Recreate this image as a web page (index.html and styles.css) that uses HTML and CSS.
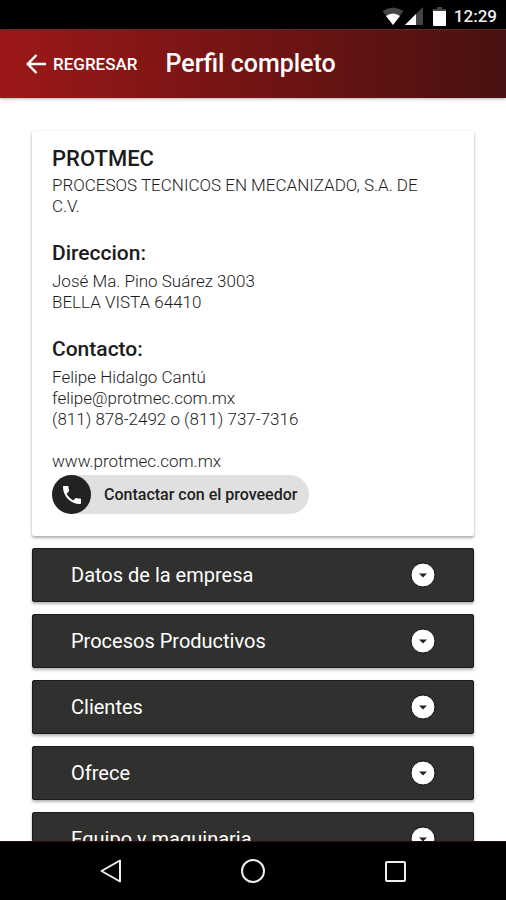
FILE: index.html
```html
<!DOCTYPE html>
<html lang="es">
<head>
<meta charset="utf-8">
<meta name="viewport" content="width=device-width, initial-scale=1">
<title>Perfil completo</title>
<link rel="stylesheet" href="styles.css">
</head>
<body>
<div class="status">
  <svg class="status-wifi" width="22" height="18" viewBox="0 0 22 18" aria-hidden="true"><path fill="#444" d="M11 18 .5 4Q11-3 21.500 4z"/><path fill="#fff" d="M11 18 4 9Q11 4 18 9z"/></svg>
  <svg class="status-signal" width="18" height="18" viewBox="0 0 18 18" aria-hidden="true"><path fill="#444" d="M0 18 18 0v18z"/><path fill="#fff" d="M0 18 11 7v11z"/></svg>
  <svg class="status-battery" width="13" height="19" viewBox="0 0 13 19" aria-hidden="true"><path fill="#444" d="M4 0h5v2h3q1 0 1 1v2H0V3q0-1 1-1h3z"/><path fill="#fff" d="M0 4h13v14q0 1-1 1H1q-1 0-1-1z"/></svg>
  <span class="status-time">12:29</span>
</div>
<header class="header">
  <a class="back" href="#">
    <svg width="20" height="20" viewBox="0 0 20 20" fill="none" stroke="currentColor" stroke-width="2.500" aria-hidden="true"><path d="M20 10H2M10.500 1 1.800 10l8.700 9"/></svg>
    <span>REGRESAR</span>
  </a>
  <h1 class="title">Perfil completo</h1>
</header>
<main class="content">
  <section class="card">
    <h2 class="company">PROTMEC</h2>
    <p class="text">PROCESOS TECNICOS EN MECANIZADO, S.A. DE C.V.</p>
    <h3 class="heading">Direccion:</h3>
    <p class="text">José Ma. Pino Suárez 3003<br>BELLA VISTA 64410</p>
    <h3 class="heading">Contacto:</h3>
    <p class="text">Felipe Hidalgo Cantú<br>felipe@protmec.com.mx<br>(811) 878-2492 o (811) 737-7316</p>
    <p class="text site">www.protmec.com.mx</p>
    <button class="contact" type="button">
      <span class="contact-icon"><svg width="24" height="24" viewBox="0 0 24 24" fill="#fff" aria-hidden="true"><path d="M6.620 10.790c1.440 2.830 3.760 5.140 6.590 6.590l2.200-2.200c.27-.27.67-.36 1.020-.24 1.120.37 2.330.57 3.570.57.55 0 1 .45 1 1V20c0 .55-.45 1-1 1-9.390 0-17-7.610-17-17 0-.55.45-1 1-1h3.500c.55 0 1 .45 1 1 0 1.250.2 2.450.57 3.570.11.350.03.740-.25 1.020z"/></svg></span>
      <span>Contactar con el proveedor</span>
    </button>
  </section>
  <button class="row" type="button"><span>Datos de la empresa</span><svg width="26" height="26" viewBox="0 0 26 26" aria-hidden="true"><circle class="disc" cx="13" cy="13" r="12"/><path class="caret" d="M9 11.500h8l-4 4z"/></svg></button>
  <button class="row" type="button"><span>Procesos Productivos</span><svg width="26" height="26" viewBox="0 0 26 26" aria-hidden="true"><circle class="disc" cx="13" cy="13" r="12"/><path class="caret" d="M9 11.500h8l-4 4z"/></svg></button>
  <button class="row" type="button"><span>Clientes</span><svg width="26" height="26" viewBox="0 0 26 26" aria-hidden="true"><circle class="disc" cx="13" cy="13" r="12"/><path class="caret" d="M9 11.500h8l-4 4z"/></svg></button>
  <button class="row" type="button"><span>Ofrece</span><svg width="26" height="26" viewBox="0 0 26 26" aria-hidden="true"><circle class="disc" cx="13" cy="13" r="12"/><path class="caret" d="M9 11.500h8l-4 4z"/></svg></button>
  <button class="row" type="button"><span>Equipo y maquinaria</span><svg width="26" height="26" viewBox="0 0 26 26" aria-hidden="true"><circle class="disc" cx="13" cy="13" r="12"/><path class="caret" d="M9 11.500h8l-4 4z"/></svg></button>
</main>
<nav class="navbar">
  <button class="nav-button" type="button" aria-label="Atrás"><svg width="26" height="26" viewBox="0 0 26 26"><path d="M22 2.500v21L3.500 13z"/></svg></button>
  <button class="nav-button" type="button" aria-label="Inicio"><svg width="26" height="26" viewBox="0 0 26 26"><circle cx="13" cy="13" r="11"/></svg></button>
  <button class="nav-button" type="button" aria-label="Recientes"><svg width="26" height="26" viewBox="0 0 26 26"><rect x="4" y="4" width="19" height="19" rx="1"/></svg></button>
</nav>
</body>
</html>
```

FILE: styles.css
```css
* {
  box-sizing: border-box;
}

body {
  display: flex;
  flex-direction: column;
  height: 100vh;
  margin: 0;
  overflow: hidden;
  background: #fff;
  color: #1c1c1c;
  font-family: Roboto, "Liberation Sans", sans-serif;
}

h1, h2, h3, p {
  margin: 0;
}

button {
  border: 0;
  font-family: inherit;
}

.status {
  display: flex;
  flex: none;
  align-items: center;
  justify-content: flex-end;
  padding: 4px 9px 1px 0;
  background: #000;
  color: #eee;
}

.status-signal {
  margin-left: 1px;
}

.status-battery {
  margin-left: 10px;
}

.status-time {
  margin-left: 8px;
  font-size: 17px;
  font-weight: 500;
  line-height: 24px;
}

.header {
  display: flex;
  flex: none;
  align-items: center;
  gap: 28px;
  padding: 20px 26px;
  border-top: 1px solid #5c2a2a;
  background: linear-gradient(90deg, #9c1818, #661313 65%, #481111);
  box-shadow: 0 1px 3px rgba(0, 0, 0, 0.3);
  color: #fff;
}

.back {
  display: flex;
  align-items: center;
  gap: 7px;
  color: inherit;
  font-size: 17px;
  font-weight: 500;
  text-decoration: none;
}

.title {
  font-size: 25px;
  font-weight: 500;
  line-height: 28px;
}

.content {
  display: flex;
  flex: 1;
  flex-direction: column;
  gap: 12px;
  min-height: 0;
  padding: 33px 32px 0;
  overflow: hidden;
}

.card {
  flex: none;
  padding: 13px 36px 22px 20px;
  border-radius: 2px;
  background: #fff;
  box-shadow: 0 2px 3px rgba(0, 0, 0, 0.3), 0 0 2px rgba(0, 0, 0, 0.12);
}

.company {
  margin-bottom: 2px;
  font-size: 22px;
  font-weight: 500;
  line-height: 29px;
}

.heading {
  margin: 22px 0 4px;
  font-size: 21px;
  font-weight: 500;
  line-height: 28px;
}

.text {
  font-size: 17px;
  font-weight: 300;
  line-height: 21px;
}

.site {
  margin-top: 21px;
}

.contact {
  display: flex;
  align-items: center;
  gap: 13px;
  margin-top: 3px;
  padding: 0 12px 0 0;
  border-radius: 20px;
  background: #e0e0e0;
  color: #222;
  font-size: 16px;
  font-weight: 500;
}

.contact-icon {
  display: grid;
  place-items: center;
  width: 39px;
  height: 39px;
  border-radius: 50%;
  background: #222;
}

.row {
  display: flex;
  flex: none;
  align-items: center;
  justify-content: space-between;
  min-height: 54px;
  padding: 0 37px 0 38px;
  border: 1px solid #1b1b1a;
  border-radius: 2px;
  background: #30302e;
  box-shadow: 0 2px 3px rgba(0, 0, 0, 0.3);
  color: #fff;
  font-size: 20px;
  text-align: left;
}

.disc {
  fill: #fff;
  stroke: #111;
}

.caret {
  fill: #222;
}

.navbar {
  display: flex;
  flex: none;
  justify-content: center;
  gap: 116px;
  padding: 16px 0;
  border-top: 1px solid #350c0c;
  background: #000;
}

.nav-button {
  display: flex;
  padding: 0;
  background: none;
}

.nav-button svg {
  fill: none;
  stroke: #eee;
  stroke-width: 2;
  stroke-linejoin: round;
}
```
